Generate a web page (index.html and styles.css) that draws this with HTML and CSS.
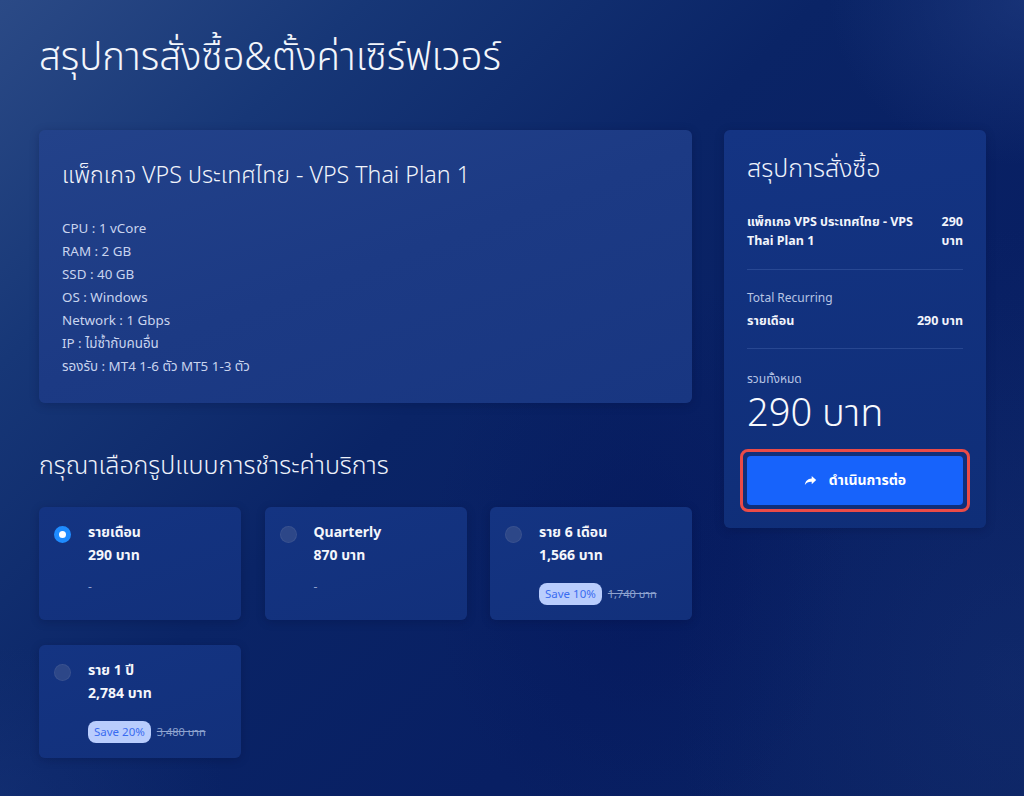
FILE: index.html
```html
<!DOCTYPE html>
<html lang="th">
<head>
<meta charset="utf-8">
<title>สรุปการสั่งซื้อ</title>
<link rel="stylesheet" href="styles.css">
</head>
<body>
<div class="page">
  <h1 class="page-title">สรุปการสั่งซื้อ&amp;ตั้งค่าเซิร์ฟเวอร์</h1>
  <div class="layout">
    <div class="main">
      <section class="card product">
        <h2 class="product-title">แพ็กเกจ VPS ประเทศไทย - VPS Thai Plan 1</h2>
        <ul class="specs">
          <li>CPU : 1 vCore</li>
          <li>RAM : 2 GB</li>
          <li>SSD : 40 GB</li>
          <li>OS : Windows</li>
          <li>Network : 1 Gbps</li>
          <li>IP : ไม่ซ้ำกับคนอื่น</li>
          <li>รองรับ : MT4 1-6 ตัว MT5 1-3 ตัว</li>
        </ul>
      </section>
      <h2 class="section-title">กรุณาเลือกรูปแบบการชำระค่าบริการ</h2>
      <div class="options">
        <label class="option">
          <span class="radio checked"></span>
          <span class="opt-body">
            <span class="opt-name">รายเดือน</span>
            <span class="opt-price">290 บาท</span>
            <span class="opt-extra dash">-</span>
          </span>
        </label>
        <label class="option">
          <span class="radio"></span>
          <span class="opt-body">
            <span class="opt-name">Quarterly</span>
            <span class="opt-price">870 บาท</span>
            <span class="opt-extra dash">-</span>
          </span>
        </label>
        <label class="option">
          <span class="radio"></span>
          <span class="opt-body">
            <span class="opt-name">ราย 6 เดือน</span>
            <span class="opt-price">1,566 บาท</span>
            <span class="opt-extra"><span class="badge">Save 10%</span><s class="old">1,740 บาท</s></span>
          </span>
        </label>
        <label class="option">
          <span class="radio"></span>
          <span class="opt-body">
            <span class="opt-name">ราย 1 ปี</span>
            <span class="opt-price">2,784 บาท</span>
            <span class="opt-extra"><span class="badge">Save 20%</span><s class="old">3,480 บาท</s></span>
          </span>
        </label>
      </div>
    </div>
    <aside class="card summary">
      <h2 class="summary-title">สรุปการสั่งซื้อ</h2>
      <div class="sum-row">
        <span>แพ็กเกจ VPS ประเทศไทย - VPS Thai Plan 1</span>
        <span class="amt">290 บาท</span>
      </div>
      <hr class="divider">
      <div class="label-sm">Total Recurring</div>
      <div class="sum-row">
        <span>รายเดือน</span>
        <span class="amt nowrap">290 บาท</span>
      </div>
      <hr class="divider second">
      <div class="label-sm label-total">รวมทั้งหมด</div>
      <div class="total">290 บาท</div>
      <div class="btn-ring">
        <button class="btn" type="button">
          <svg class="btn-icon" viewBox="0 0 16 16" width="13" height="13" aria-hidden="true"><path d="M9.5 2.5 L15 7.5 L9.5 12.5 V9.6 C5.6 9.4 3.2 10.6 1 13.5 C1.6 8.6 4.4 5.8 9.5 5.4 Z" fill="#fff"/></svg>
          <span>ดำเนินการต่อ</span>
        </button>
      </div>
    </aside>
  </div>
</div>
</body>
</html>
```

FILE: styles.css
```css
* { box-sizing: border-box; }
html, body { margin: 0; padding: 0; }
body {
  min-height: 796px;
  font-family: "Noto Sans", "Noto Sans Thai", "Open Sans", sans-serif;
  color: #ffffff;
  background:
    radial-gradient(ellipse 300px 420px at 640px 560px, rgba(4, 22, 90, 0.5), rgba(4, 22, 90, 0) 70%),
    radial-gradient(ellipse 480px 650px at 1010px 680px, rgba(36, 64, 130, 0.22), rgba(36, 64, 130, 0) 70%),
    radial-gradient(ellipse 260px 220px at 1024px 0px, rgba(40, 70, 140, 0.45), rgba(40, 70, 140, 0) 75%),
    radial-gradient(ellipse 300px 200px at 0px 796px, rgba(30, 60, 130, 0.35), rgba(30, 60, 130, 0) 75%),
    linear-gradient(135deg, #2b4a86 0%, #173777 20%, #0a2466 45%, #081f63 70%, #0a2262 100%);
  background-color: #0b2266;
  overflow: hidden;
}
.page { padding: 28px 38px 40px 39px; }
.page-title {
  margin: 0 0 42px 0;
  font-family: "Noto Sans Thai", "Noto Sans", sans-serif;
  font-weight: 300;
  font-size: 38.5px;
  line-height: 60px;
  color: #f3f6fc;
}
.layout {
  display: grid;
  grid-template-columns: 653px 262px;
  column-gap: 32px;
  align-items: start;
}
.card {
  border-radius: 6px;
  box-shadow: 0 2px 10px rgba(0, 10, 50, 0.25);
}
.product {
  height: 273px;
  padding: 31px 23px 20px;
  background: linear-gradient(160deg, #23428a 0%, #1c3a84 50%, #183681 100%);
}
.product-title {
  margin: 0 0 26px 0;
  font-family: "Noto Sans Thai", "Noto Sans", sans-serif;
  font-size: 23.2px;
  line-height: 30px;
  font-weight: 300;
  color: #f1f4fb;
}
.specs {
  list-style: none;
  margin: 0;
  padding: 0;
  font-size: 13.4px;
  line-height: 23px;
  color: #c9d4ee;
}
.section-title {
  margin: 46px 0 24px 0;
  font-family: "Noto Sans Thai", "Noto Sans", sans-serif;
  font-size: 25px;
  line-height: 34px;
  font-weight: 300;
  color: #eef2fb;
}
.options {
  display: grid;
  grid-template-columns: repeat(3, 202px);
  column-gap: 23.5px;
  row-gap: 25px;
}
.option {
  height: 113px;
  display: flex;
  align-items: flex-start;
  gap: 17px;
  padding: 13px 15px;
  border-radius: 6px;
  background: linear-gradient(160deg, #143482 0%, #12307b 100%);
  box-shadow: 0 2px 8px rgba(0, 10, 50, 0.25);
  cursor: pointer;
}
.radio {
  flex: none;
  width: 17px;
  height: 17px;
  margin-top: 6px;
  border-radius: 50%;
  background: #2d4788;
  border: 1px solid rgba(255, 255, 255, 0.06);
}
.radio.checked {
  background: #ffffff;
  border: 5px solid #1f8cff;
}
.opt-body { display: flex; flex-direction: column; }
.opt-name, .opt-price {
  font-size: 14px;
  line-height: 23px;
  font-weight: 700;
  color: #f4f6fb;
}
.opt-extra {
  margin-top: 17px;
  display: flex;
  align-items: center;
  gap: 6px;
  font-size: 12px;
  line-height: 22px;
}
.dash { color: #8fa2cf; margin-top: 10px; }
.badge {
  display: inline-block;
  padding: 0 6px;
  border-radius: 8px;
  background: #b9cdfd;
  color: #3a6cf0;
  font-size: 11.5px;
  line-height: 22px;
}
.old {
  color: #8ea3cf;
  font-size: 11px;
}
.summary {
  padding: 22px 23px 16px;
  background: linear-gradient(170deg, #143483 0%, #0f2e78 100%);
}
.summary-title {
  margin: 0 0 26px 0;
  font-family: "Noto Sans Thai", "Noto Sans", sans-serif;
  font-size: 25px;
  line-height: 34px;
  font-weight: 300;
  color: #eef2fb;
}
.sum-row {
  display: flex;
  justify-content: space-between;
  gap: 16px;
  font-size: 12.5px;
  line-height: 19px;
  font-weight: 700;
  color: #f1f4fb;
}
.amt { text-align: right; flex: none; width: 26px; }
.amt.nowrap { width: auto; white-space: nowrap; }
.divider {
  margin: 19px 0 20px 0;
  border: 0;
  height: 1px;
  background: rgba(120, 150, 220, 0.22);
}
.divider.second { margin-top: 18px; margin-bottom: 23px; }
.label-sm {
  font-size: 12px;
  line-height: 16px;
  color: #b7c4e4;
  margin-bottom: 5px;
}
.label-sm.label-total { line-height: 14px; margin-bottom: 4px; }
.total {
  font-family: "Noto Sans Thai", "Noto Sans", sans-serif;
  font-size: 38px;
  line-height: 50px;
  font-weight: 300;
  color: #f7f9fd;
  margin-bottom: 9px;
}
.btn-ring {
  margin: 0 -7px;
  padding: 4px;
  border: 3px solid #ea4b47;
  border-radius: 8px;
}
.btn {
  width: 100%;
  height: 49px;
  display: flex;
  align-items: center;
  justify-content: center;
  gap: 12px;
  border: 0;
  border-radius: 4px;
  background: #1763fb;
  color: #ffffff;
  font-family: "Noto Sans", "Noto Sans Thai", sans-serif;
  font-size: 14px;
  font-weight: 700;
  cursor: pointer;
}
.btn-icon { display: block; }
```
